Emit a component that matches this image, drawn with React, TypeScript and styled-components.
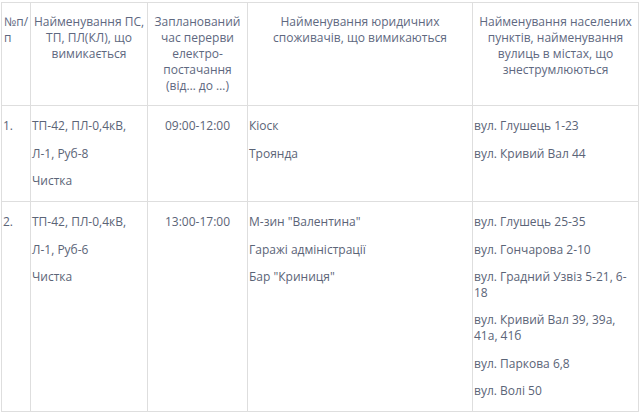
import styled, { createGlobalStyle } from "styled-components"

const GlobalStyle = createGlobalStyle`
  html, body {
    margin: 0;
    padding: 0;
    background: #ffffff;
  }
  body {
    font-family: "Open Sans", "Noto Sans", sans-serif;
    font-size: 12px;
    color: #5b6477;
  }
`

const Wrapper = styled.div`
  padding: 2px 0 0 1px;
`

const Table = styled.table`
  width: 638px;
  border-collapse: collapse;
  table-layout: fixed;
`

const HeadCell = styled.th<{ $align?: string }>`
  border: 1px solid #dedede;
  padding: 0 2px;
  vertical-align: top;
  font-weight: 400;
  line-height: 16px;
  text-align: ${(p) => p.$align || "center"};
  color: #5e6880;

  p {
    margin: 11px 0;
  }
`

const Cell = styled.td<{ $align?: string }>`
  border: 1px solid #dedede;
  padding: 1px 1px;
  vertical-align: top;
  line-height: 16px;
  text-align: ${(p) => p.$align || "left"};

  p {
    margin: 11.3px 0;
  }
`

type Row = {
  num: string
  line: string[]
  time: string
  consumers: string[]
  streets: string[]
}

const rows: Row[] = [
  {
    num: "1.",
    line: ["ТП-42, ПЛ-0,4кВ,", "Л-1, Руб-8", "Чистка"],
    time: "09:00-12:00",
    consumers: ["Кіоск", "Троянда"],
    streets: ["вул. Глушець 1-23", "вул. Кривий Вал 44"],
  },
  {
    num: "2.",
    line: ["ТП-42, ПЛ-0,4кВ,", "Л-1, Руб-6", "Чистка"],
    time: "13:00-17:00",
    consumers: ['М-зин "Валентина"', "Гаражі адміністрації", 'Бар "Криниця"'],
    streets: [
      "вул. Глушець 25-35",
      "вул. Гончарова 2-10",
      "вул. Градний Узвіз 5-21, 6-18",
      "вул. Кривий Вал 39, 39а, 41а, 41б",
      "вул. Паркова 6,8",
      "вул. Волі 50",
    ],
  },
]

const Paras = ({ items }: { items: string[] }) => (
  <>
    {items.map((t) => (
      <p key={t}>{t}</p>
    ))}
  </>
)

export default function App() {
  return (
    <Wrapper>
      <GlobalStyle />
      <Table>
        <colgroup>
          <col style={{ width: 29 }} />
          <col style={{ width: 117 }} />
          <col style={{ width: 100 }} />
          <col style={{ width: 225 }} />
          <col style={{ width: 166 }} />
        </colgroup>
        <thead>
          <tr>
            <HeadCell $align="left">
              <p>№п/п</p>
            </HeadCell>
            <HeadCell>
              <p>Найменування ПС, ТП, ПЛ(КЛ), що вимикається</p>
            </HeadCell>
            <HeadCell>
              <p>
                Запланований час перерви електро-
                <br />
                постачання (від… до …)
              </p>
            </HeadCell>
            <HeadCell>
              <p>Найменування юридичних споживачів, що вимикаються</p>
            </HeadCell>
            <HeadCell>
              <p>Найменування населених пунктів, найменування вулиць в містах, що знеструмлюються</p>
            </HeadCell>
          </tr>
        </thead>
        <tbody>
          {rows.map((r) => (
            <tr key={r.num}>
              <Cell>
                <p>{r.num}</p>
              </Cell>
              <Cell>
                <Paras items={r.line} />
              </Cell>
              <Cell $align="center">
                <p>{r.time}</p>
              </Cell>
              <Cell>
                <Paras items={r.consumers} />
              </Cell>
              <Cell>
                <Paras items={r.streets} />
              </Cell>
            </tr>
          ))}
        </tbody>
      </Table>
    </Wrapper>
  )
}
